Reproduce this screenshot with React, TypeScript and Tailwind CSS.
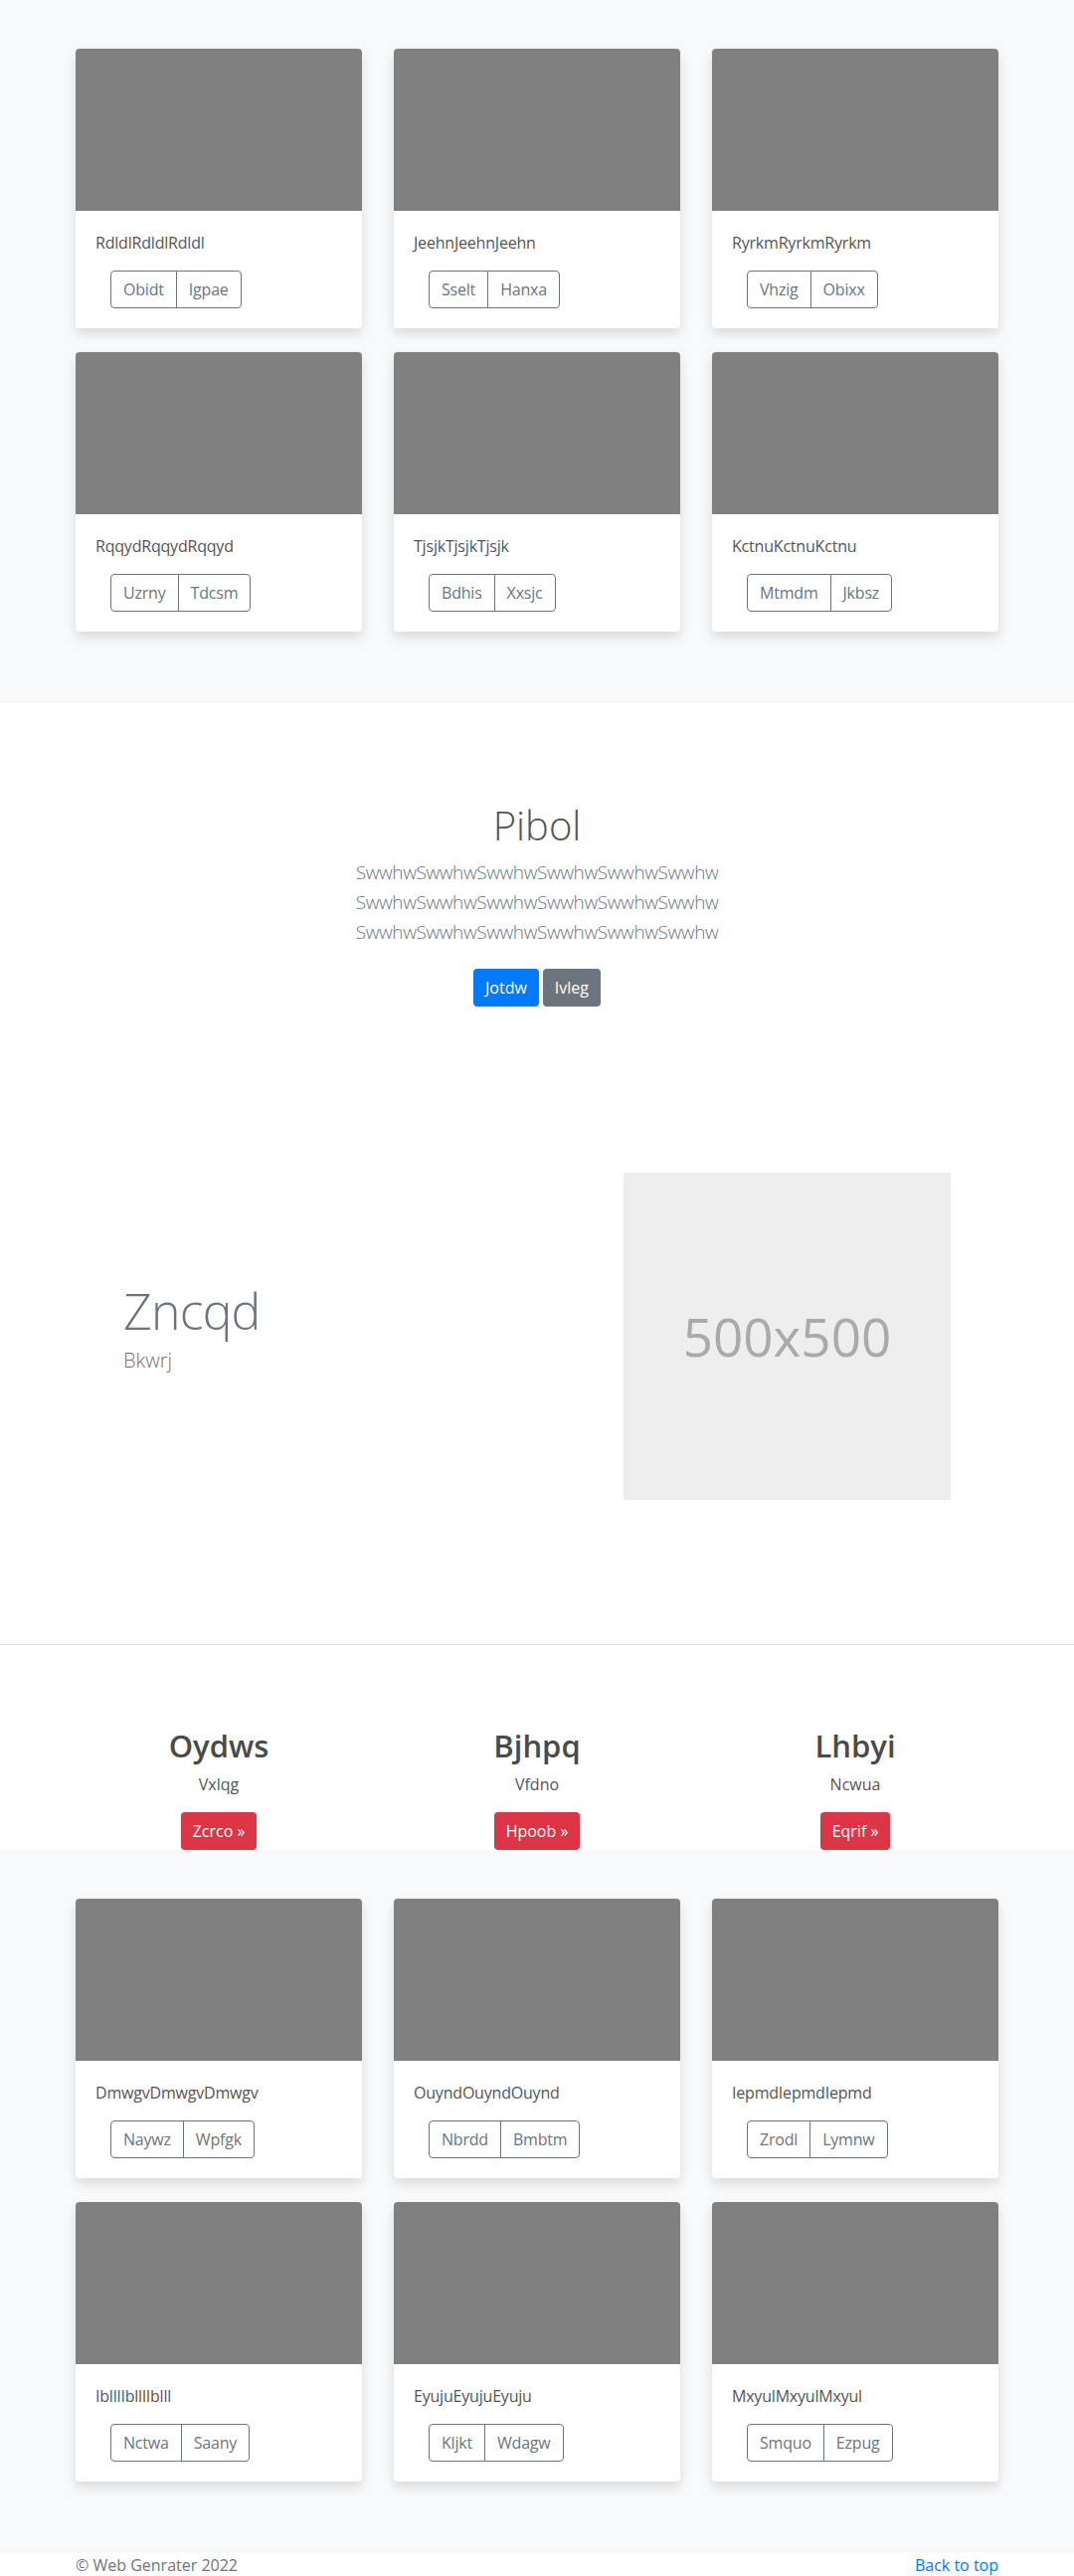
import React from "react";

type CardData = { title: string; a: string; b: string };

const top: CardData[] = [
  { title: "RdldlRdldlRdldl", a: "Obidt", b: "Igpae" },
  { title: "JeehnJeehnJeehn", a: "Sselt", b: "Hanxa" },
  { title: "RyrkmRyrkmRyrkm", a: "Vhzig", b: "Obixx" },
  { title: "RqqydRqqydRqqyd", a: "Uzrny", b: "Tdcsm" },
  { title: "TjsjkTjsjkTjsjk", a: "Bdhis", b: "Xxsjc" },
  { title: "KctnuKctnuKctnu", a: "Mtmdm", b: "Jkbsz" },
];

const bottom: CardData[] = [
  { title: "DmwgvDmwgvDmwgv", a: "Naywz", b: "Wpfgk" },
  { title: "OuyndOuyndOuynd", a: "Nbrdd", b: "Bmbtm" },
  { title: "IepmdIepmdIepmd", a: "Zrodl", b: "Lymnw" },
  { title: "IblllIblllIblll", a: "Nctwa", b: "Saany" },
  { title: "EyujuEyujuEyuju", a: "Kljkt", b: "Wdagw" },
  { title: "MxyulMxyulMxyul", a: "Smquo", b: "Ezpug" },
];

function Card({ d }: { d: CardData }) {
  return (
    <div className="bg-white rounded overflow-hidden shadow-[0_6px_12px_rgba(0,0,0,0.12)]">
      <div className="h-[163px] bg-[#808080]" />
      <div className="p-5">
        <p className="mb-4 text-[16px] leading-6 text-[#555] tracking-[-0.2px]">{d.title}</p>
        <div className="ml-[15px] inline-flex">
          <button className="h-[38px] px-3 border border-[#6c757d] rounded-l text-[#6c757d] text-[16px] leading-6 tracking-[-0.2px]">
            {d.a}
          </button>
          <button className="h-[38px] px-3 border border-[#6c757d] -ml-px rounded-r text-[#6c757d] text-[16px] leading-6 tracking-[-0.2px]">
            {d.b}
          </button>
        </div>
      </div>
    </div>
  );
}

function Album({ items }: { items: CardData[] }) {
  return (
    <section className="bg-[#f8f9fa] pt-[49px] pb-[72px]">
      <div className="mx-auto w-[928px] grid grid-cols-3 gap-x-8 gap-y-6">
        {items.map((d) => (
          <Card key={d.title} d={d} />
        ))}
      </div>
    </section>
  );
}

export default function App() {
  const lead = "SwwhwSwwhwSwwhwSwwhwSwwhwSwwhw";
  return (
    <div className="font-['Open_Sans','Noto_Sans',sans-serif] text-[16px] leading-6 text-[#555] bg-white">
      <Album items={top} />

      <section className="bg-white">
        <div className="pt-[99px] text-center">
          <h1 className="text-[40px] leading-[48px] font-light text-[#555] mb-2">Pibol</h1>
          <p className="text-[19px] leading-[30px] font-light text-[#6c757d] tracking-[-0.4px] mb-[22px]">
            <span className="block">{lead}</span>
            <span className="block">{lead}</span>
            <span className="block">{lead}</span>
          </p>
          <div className="flex justify-center gap-1">
            <button className="h-[38px] px-3 rounded bg-[#007bff] text-white text-[16px]">Jotdw</button>
            <button className="h-[38px] px-3 rounded bg-[#6c757d] text-white text-[16px]">Ivleg</button>
          </div>
        </div>

        <div className="mx-auto w-[928px] flex items-center mt-[167px]">
          <div className="flex-1 pl-12 mb-[12px]">
            <h2 className="text-[50px] leading-none font-light tracking-[-0.05rem] text-[#6c757d]">Zncqd</h2>
            <p className="text-[20px] leading-[30px] font-light text-[#6c757d] mt-[10px]">Bkwrj</p>
          </div>
          <div className="w-[329px] h-[329px] mr-12 bg-[#eeeeee] flex items-center justify-center">
            <span className="text-[53px] text-[#aaaaaa]">500x500</span>
          </div>
        </div>

        <hr className="mt-[145px] border-0 border-t border-[#e5e5e5]" />

        <div className="mx-auto w-[960px] grid grid-cols-3 text-center pt-[82px]">
          {[
            { h: "Oydws", p: "Vxlqg", b: "Zcrco »" },
            { h: "Bjhpq", p: "Vfdno", b: "Hpoob »" },
            { h: "Lhbyi", p: "Ncwua", b: "Eqrif »" },
          ].map((c) => (
            <div key={c.h} className="px-[15px]">
              <h2 className="text-[31px] leading-[38px] font-semibold text-[#4a4a4a] mb-2">{c.h}</h2>
              <p className="text-[16px] leading-6 text-[#555] mb-4">{c.p}</p>
              <button className="h-[38px] px-3 rounded bg-[#dc3545] text-white text-[16px]">{c.b}</button>
            </div>
          ))}
        </div>
      </section>

      <Album items={bottom} />

      <footer className="bg-white pb-12">
        <div className="mx-auto w-[928px] flex justify-between text-[16px] leading-6">
          <p className="text-[#6c757d]">© Web Genrater 2022</p>
          <a href="#" className="text-[#007bff]">Back to top</a>
        </div>
      </footer>
    </div>
  );
}
